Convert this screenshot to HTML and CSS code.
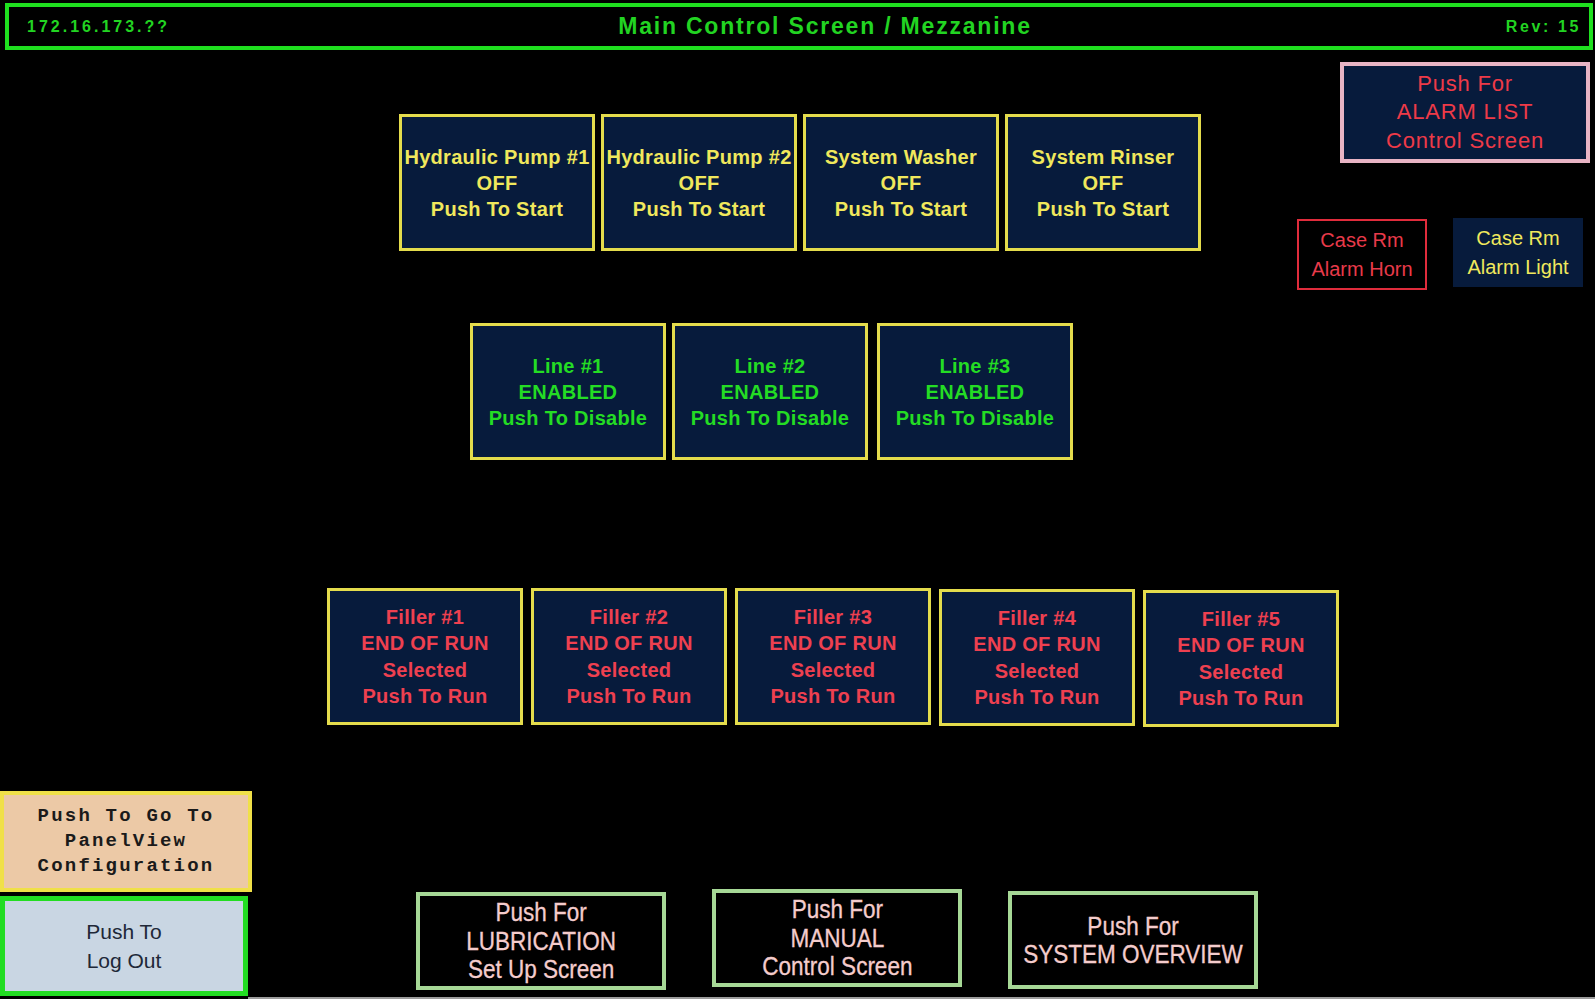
FILE: index.html
```html
<!DOCTYPE html>
<html lang="en">
<head>
  <meta charset="UTF-8">
  <title>Main Control Screen / Mezzanine</title>
  <link rel="stylesheet" href="styles.css">
</head>
<body>
  <div class="header">
    <span class="ip">172.16.173.??</span>
    <span class="title">Main Control Screen / Mezzanine</span>
    <span class="rev">Rev: 15</span>
  </div>

  <div class="top">
    <div class="row pumps">
      <div class="btn yellow">Hydraulic Pump #1<br>OFF<br>Push To Start</div>
      <div class="btn yellow">Hydraulic Pump #2<br>OFF<br>Push To Start</div>
      <div class="btn yellow">System Washer<br>OFF<br>Push To Start</div>
      <div class="btn yellow">System Rinser<br>OFF<br>Push To Start</div>
    </div>

    <div class="side">
      <div class="alarm-list">Push For<br>ALARM LIST<br>Control Screen</div>
      <div class="case-row">
        <div class="case horn">Case Rm<br>Alarm Horn</div>
        <div class="case light">Case Rm<br>Alarm Light</div>
      </div>
    </div>
  </div>

  <div class="row lines">
    <div class="btn green">Line #1<br>ENABLED<br>Push To Disable</div>
    <div class="btn green">Line #2<br>ENABLED<br>Push To Disable</div>
    <div class="btn green">Line #3<br>ENABLED<br>Push To Disable</div>
  </div>

  <div class="row fillers">
    <div class="btn red">Filler #1<br>END OF RUN<br>Selected<br>Push To Run</div>
    <div class="btn red">Filler #2<br>END OF RUN<br>Selected<br>Push To Run</div>
    <div class="btn red">Filler #3<br>END OF RUN<br>Selected<br>Push To Run</div>
    <div class="btn red low">Filler #4<br>END OF RUN<br>Selected<br>Push To Run</div>
    <div class="btn red lower">Filler #5<br>END OF RUN<br>Selected<br>Push To Run</div>
  </div>

  <div class="bottom">
    <div class="left-col">
      <div class="panelview">Push To Go To<br>PanelView<br>Configuration</div>
      <div class="logout">Push To<br>Log Out</div>
    </div>
    <div class="nav">
      <div class="nav-btn"><span class="narrow">Push For<br>LUBRICATION<br>Set Up Screen</span></div>
      <div class="nav-btn up"><span class="narrow">Push For<br>MANUAL<br>Control Screen</span></div>
      <div class="nav-btn mid"><span class="narrow">Push For<br>SYSTEM OVERVIEW</span></div>
    </div>
  </div>
  <div class="strip"></div>
</body>
</html>
```

FILE: styles.css
```css
body {
  margin: 0;
  background: #000;
  font-family: "Liberation Sans", Arial, sans-serif;
  width: 1595px;
  height: 999px;
  overflow: hidden;
}

.header {
  box-sizing: border-box;
  margin: 3px 2px 0 5px;
  height: 47px;
  border: 4px solid #1fe01f;
  display: flex;
  align-items: center;
  justify-content: space-between;
  padding: 0 8px 0 18px;
  color: #22d422;
  font-weight: bold;
}

.ip {
  font-size: 16px;
  letter-spacing: 3px;
  width: 300px;
}

.title {
  font-size: 23px;
  letter-spacing: 1.8px;
  margin-left: 42px;
}

.rev {
  font-size: 16px;
  letter-spacing: 2.6px;
  width: 300px;
  text-align: right;
}

.top {
  display: flex;
  align-items: flex-start;
  height: 273px;
}

.row {
  display: flex;
  gap: 6px;
}

.pumps {
  margin: 64px 0 0 399px;
}

.btn {
  box-sizing: border-box;
  width: 196px;
  height: 137px;
  background: #071b3c;
  border: 3px solid #e4dc4c;
  display: flex;
  align-items: center;
  justify-content: center;
  text-align: center;
  font-weight: bold;
  font-size: 20px;
  line-height: 26px;
  letter-spacing: 0.3px;
}

.yellow { color: #f0e85c; }
.green { color: #24dc24; }
.red { color: #ee4050; }

.side {
  margin-left: auto;
  margin-right: 7px;
  margin-top: 12px;
  display: flex;
  flex-direction: column;
  align-items: flex-end;
}

.alarm-list {
  box-sizing: border-box;
  width: 250px;
  height: 101px;
  background: #071b3c;
  border: 4px solid #e8b4c4;
  color: #ee3a48;
  font-size: 22px;
  line-height: 28.5px;
  letter-spacing: 0.8px;
  text-align: center;
  display: flex;
  align-items: center;
  justify-content: center;
  margin-right: -2px;
}

.case-row {
  display: flex;
  gap: 26px;
  margin-top: 55px;
  margin-right: 5px;
}

.case {
  box-sizing: border-box;
  width: 130px;
  height: 71px;
  font-size: 20px;
  line-height: 29px;
  text-align: center;
  display: flex;
  align-items: center;
  justify-content: center;
}

.horn {
  border: 2px solid #e02c3c;
  color: #e83a4a;
  margin-top: 1px;
}

.light {
  background: #071b3c;
  color: #f0e85c;
  height: 69px;
}

.lines {
  margin: 0 0 0 470px;
}

.lines .btn:last-child {
  margin-left: 3px;
}

.fillers {
  margin: 128px 0 0 327px;
  gap: 8px;
}

.fillers .btn {
  line-height: 26.5px;
}

.fillers .low {
  margin-top: 1px;
}

.fillers .lower {
  margin-top: 2px;
}

.bottom {
  display: flex;
  align-items: flex-start;
  margin-top: 64px;
}

.left-col {
  display: flex;
  flex-direction: column;
  gap: 4px;
}

.panelview {
  box-sizing: border-box;
  width: 252px;
  height: 101px;
  background: #ecc9a6;
  border: 4px solid #f0e048;
  color: #1a1a1a;
  font-family: "Liberation Mono", "Courier New", monospace;
  font-weight: bold;
  font-size: 19px;
  letter-spacing: 2.2px;
  line-height: 25px;
  text-align: center;
  display: flex;
  align-items: center;
  justify-content: center;
}

.logout {
  box-sizing: border-box;
  width: 248px;
  height: 100px;
  background: #c9d6e3;
  border: 5px solid #22dd22;
  color: #202838;
  font-size: 21px;
  line-height: 29px;
  text-align: center;
  display: flex;
  align-items: center;
  justify-content: center;
}

.nav {
  display: flex;
  gap: 46px;
  margin: 101px 0 0 164px;
}

.nav-btn {
  box-sizing: border-box;
  width: 250px;
  height: 98px;
  border: 4px solid #a6d896;
  color: #f4cccc;
  font-size: 25px;
  line-height: 28.5px;
  text-align: center;
  display: flex;
  align-items: center;
  justify-content: center;
}

.narrow {
  display: inline-block;
  white-space: nowrap;
  transform: scaleX(0.9);
  -webkit-text-stroke: 0.3px #f4cccc;
}

.nav-btn.up {
  margin-top: -3px;
}

.nav-btn.mid {
  margin-top: -1px;
}

.strip {
  height: 3px;
  margin-top: 1px;
  margin-left: 248px;
  background: #9c9c9c;
}
```
